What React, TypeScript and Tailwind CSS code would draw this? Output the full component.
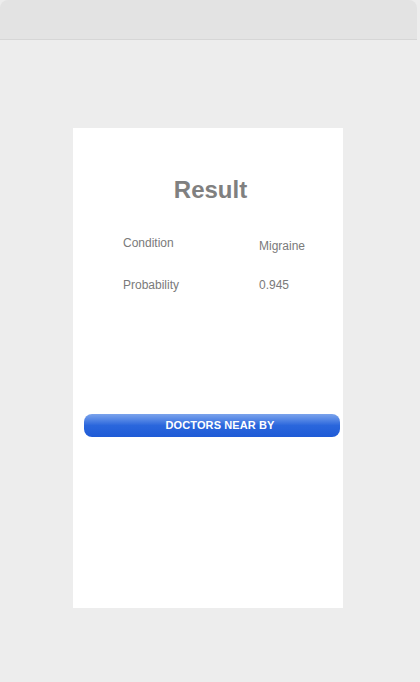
import React from "react";

const rows = [
  { label: "Condition", value: "Migraine", valueClass: "pt-[3px]" },
  { label: "Probability", value: "0.945", valueClass: "" },
];

export default function App() {
  return (
    <div
      className="w-[420px] h-[682px] bg-[#ededed] flex flex-col"
      style={{ fontFamily: '"Liberation Sans", Arial, sans-serif' }}
    >
      {/* Top bar */}
      <div className="h-[40px] bg-[#e3e3e3] border-b border-[#d6d6d6] rounded-t-[8px] mr-[3px]" />

      {/* Result card */}
      <div className="mt-[88px] ml-[73px] w-[270px] h-[480px] bg-white flex flex-col">
        <h1 className="mt-[48px] pl-[5px] text-center text-[24px] font-bold text-[#808080] leading-[28px]">
          Result
        </h1>

        <div className="mt-[31px] flex flex-col gap-[23px]">
          {rows.map((r) => (
            <div key={r.label} className="flex text-[12px] text-[#7a7a7a] leading-[16px]">
              <span className="ml-[50px] w-[136px]">{r.label}</span>
              <span className={r.valueClass}>{r.value}</span>
            </div>
          ))}
        </div>

        <button className="mt-[121px] ml-[11px] w-[256px] h-[23px] pl-[16px] rounded-[8px] bg-gradient-to-b from-[#7ba3ec] via-[#2a66dc] to-[#1f5bd6] text-white text-[11px] font-bold tracking-[0.1px] flex items-center justify-center">
          DOCTORS NEAR BY
        </button>
      </div>
    </div>
  );
}
